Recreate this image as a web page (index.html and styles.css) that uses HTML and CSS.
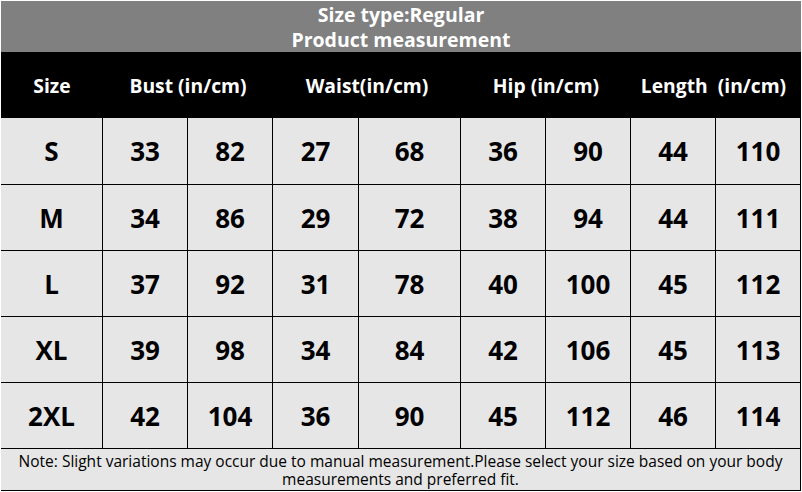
FILE: index.html
```html
<!DOCTYPE html>
<html>
<head>
<meta charset="utf-8">
<link rel="stylesheet" href="styles.css">
</head>
<body>
<div class="chart">
  <div class="title">
    <div>Size type:Regular</div>
    <div>Product measurement</div>
  </div>
  <div class="grid">
    <div class="hd">Size</div>
    <div class="hd span2">Bust (in/cm)</div>
    <div class="hd span2">Waist(in/cm)</div>
    <div class="hd span2">Hip (in/cm)</div>
    <div class="hd span2">Length&nbsp; (in/cm)&nbsp;</div>

    <div class="c">S</div><div class="c">33</div><div class="c">82</div><div class="c">27</div><div class="c">68</div><div class="c">36</div><div class="c">90</div><div class="c">44</div><div class="c">110</div>
    <div class="c">M</div><div class="c">34</div><div class="c">86</div><div class="c">29</div><div class="c">72</div><div class="c">38</div><div class="c">94</div><div class="c">44</div><div class="c">111</div>
    <div class="c">L</div><div class="c">37</div><div class="c">92</div><div class="c">31</div><div class="c">78</div><div class="c">40</div><div class="c">100</div><div class="c">45</div><div class="c">112</div>
    <div class="c">XL</div><div class="c">39</div><div class="c">98</div><div class="c">34</div><div class="c">84</div><div class="c">42</div><div class="c">106</div><div class="c">45</div><div class="c">113</div>
    <div class="c">2XL</div><div class="c">42</div><div class="c">104</div><div class="c">36</div><div class="c">90</div><div class="c">45</div><div class="c">112</div><div class="c">46</div><div class="c">114</div>

    <div class="note">Note: Slight variations may occur due to manual measurement.Please select your size based on your body measurements and preferred fit.</div>
  </div>
</div>
</body>
</html>
```

FILE: styles.css
```css
html, body {
  margin: 0;
  padding: 0;
  background: #ffffff;
}
.chart {
  width: 800px;
  margin: 1px 0 0 1px;
  font-family: "Open Sans", "Noto Sans", sans-serif;
}
.title {
  height: 51px;
  background: #808080;
  color: #ffffff;
  font-weight: 700;
  font-size: 19.5px;
  line-height: 25px;
  text-align: center;
  display: flex;
  flex-direction: column;
  justify-content: center;
}
.grid {
  display: grid;
  grid-template-columns: 102px 85px 85px 86px 102px 85px 85px 85px 85px;
  grid-template-rows: 66px 67px 66px 66px 66px 66px 42px;
  background: #e6e6e6;
}
.hd {
  background: #000000;
  color: #ffffff;
  font-weight: 700;
  font-size: 19.3px;
  display: flex;
  align-items: center;
  justify-content: center;
  white-space: nowrap;
}
.span2 {
  grid-column: span 2;
}
.c {
  border-right: 1px solid #000000;
  border-bottom: 1px solid #000000;
  display: flex;
  align-items: center;
  justify-content: center;
  font-weight: 700;
  font-size: 26px;
  color: #000000;
}
.note {
  grid-column: 1 / -1;
  border-right: 1px solid #000000;
  border-bottom: 1px solid #000000;
  font-size: 15.5px;
  line-height: 18px;
  color: #000000;
  text-align: center;
  padding: 3px 4px 0 4px;
}
```
